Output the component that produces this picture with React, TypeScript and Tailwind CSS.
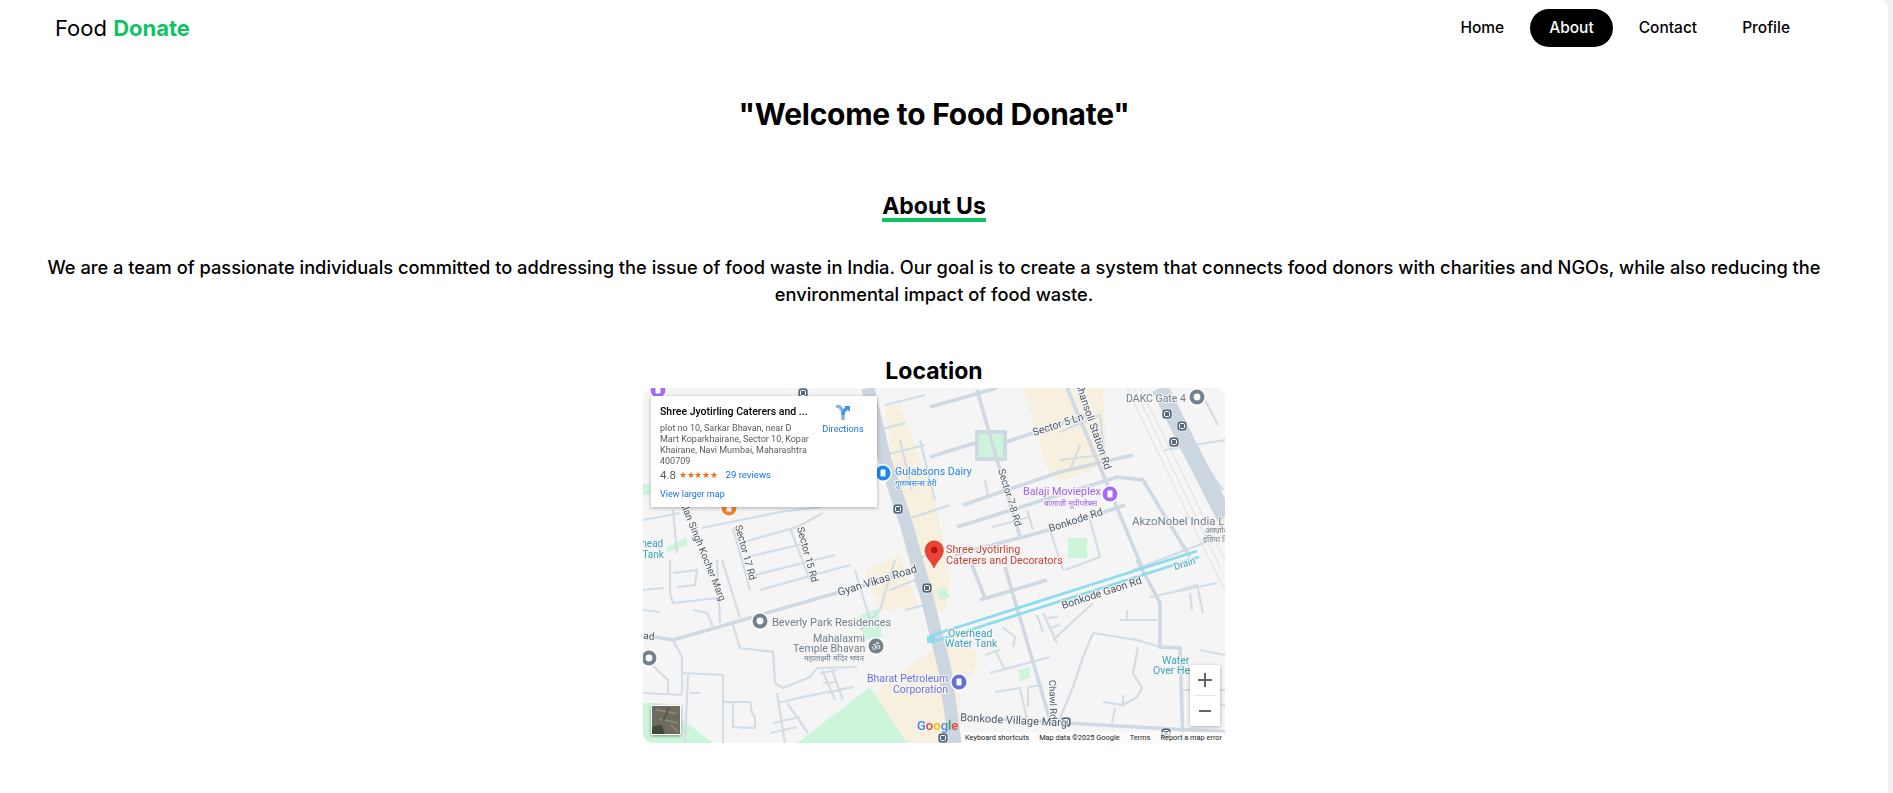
import React from "react";

const poppins = "font-['Inter','Noto_Sans',sans-serif]";

const navLinks = ["Home", "About", "Contact", "Profile"];

// road centre lines, in page coordinates (viewBox of the map starts at 643,388)
const mediumRoads = [
  "M643 635 L673 640 L840 592 L900 575",
  "M955 555 L1060 527 L1125 505",
  "M930 457 L975 443 M1003 443 L1087 415",
  "M930 407 L997 388",
  "M977 390 L1000 470 L1020 537",
  "M1005 567 L1050 720",
  "M1067 388 L1143 570",
  "M1137 560 L1160 603 L1160 647 L1180 648 L1183 743",
  "M960 717 L1225 732",
  "M957 527 L1117 477 L1143 480 L1163 513 L1190 557",
  "M963 505 L1060 472 L1133 455",
  "M970 560 L985 598",
  "M980 600 L1047 580",
];
const minorRoads = [
  "M670 560 L670 593 L673 603 L717 598 M673 573 L697 570 L695 585 L677 587",
  "M717 560 L720 623 M722 560 L740 618 M693 610 L707 613 L713 627",
  "M733 625 L740 648 L773 652 L775 683 L783 688 L810 677 L817 668 L857 667",
  "M673 640 L682 657 L682 693 M682 673 L723 675 L723 743 M688 675 L685 743",
  "M650 663 L668 680 L668 693 M643 693 L682 695 M690 693 L700 693",
  "M723 702 L750 702 L752 713 L755 717 L755 728 L733 727 L733 702",
  "M777 693 L785 743 M777 703 L803 697 L853 687 M787 703 L808 733 M770 733 L797 727 M773 723 L800 717",
  "M822 670 L835 700 M832 670 L843 700 M820 673 L837 670 M823 683 L837 682 M827 693 L853 687",
  "M673 510 L677 553 M702 528 L780 512 L820 507 M740 543 L797 527 L823 513 M747 557 L807 543",
  "M733 528 L750 590 M790 528 L810 580 M755 575 L835 555 M760 590 L850 565",
  "M643 520 L680 513 M643 590 L664 588 M643 610 L660 612",
  "M885 405 L925 395 M878 430 L905 423 M885 455 L925 445 M900 440 L912 490 M920 440 L935 500",
  "M905 520 L950 505 M915 560 L945 548 M890 590 L915 580 L925 605 L905 610",
  "M855 570 L870 620 M895 560 L880 610 L860 630",
  "M1093 633 L1137 640 L1160 647 M1093 633 L1083 657 L1073 687 L1058 723",
  "M1138 647 L1133 673 L1142 688 L1137 697 L1123 705 L1103 702 M1123 695 L1123 705 M1115 708 L1112 723",
  "M1170 593 L1197 585 L1203 613 M1190 593 L1192 610 M1150 597 L1217 583 M1120 620 L1157 620 M1127 610 L1127 620",
  "M990 673 L1050 657 M1002 627 L1015 637 L1013 647 M995 650 L1005 670 M985 655 L1000 650",
  "M995 692 L1020 688 L1027 720 M1028 687 L1043 685 M1028 687 L1028 707",
  "M1037 615 L1043 632 M1043 613 L1057 643 M1047 618 L1058 617 M1050 628 L1060 625 M1053 640 L1093 603",
  "M985 480 L988 497 M992 527 L1030 517 M1027 510 L1033 530",
  "M1050 530 L1063 570 M1090 520 L1100 557 M1065 570 L1100 557 M1133 570 L1225 535",
  "M1197 453 L1223 490 M1205 400 L1218 425 M1165 450 L1225 440",
  "M1060 432 L1100 415 L1105 460 M1080 445 L1070 470 M1060 460 L1100 455",
  "M1183 690 L1225 690 M1200 650 L1225 655 M1190 700 L1225 705",
];

const pois = [
  { x: 1197, y: 397, color: "#72838f", glyph: "ring" },
  { x: 760, y: 621, color: "#72838f", glyph: "ring" },
  { x: 649, y: 658, color: "#72838f", glyph: "ring" },
  { x: 876, y: 646, color: "#72838f", glyph: "om" },
  { x: 959, y: 682, color: "#6670d4", glyph: "P" },
  { x: 883, y: 473, color: "#1a88f0", glyph: "B" },
  { x: 1110, y: 494, color: "#a56bf5", glyph: "T" },
  { x: 729, y: 508, color: "#f2842c", glyph: "F" },
  { x: 658, y: 390, color: "#a56bf5", glyph: "T" },
];

const transit = [
  [803, 393],
  [898, 509],
  [1167, 414],
  [1182, 426],
  [1174, 442],
  [927, 588],
  [1066, 722],
  [943, 738],
  [1166, 733],
];

type Label = {
  x: number;
  y: number;
  t: string;
  c: string;
  s?: number;
  r?: number;
  a?: "start" | "middle" | "end";
};

const dark = "#4d5a68";
const gray = "#74808c";
const teal = "#3ea3b8";
const hindi = "'Noto Sans','Noto Sans CJK SC',sans-serif";

const labels: Label[] = [
  { x: 1105, y: 470, t: "Ghansoli Station Rd", c: dark, r: 71, a: "end" },
  { x: 1034, y: 436, t: "Sector 5 Ln", c: dark, r: -18 },
  { x: 1126, y: 402, t: "DAKC Gate 4", c: gray },
  { x: 1023, y: 495, t: "Balaji Movieplex", c: "#a262ea", s: 10.8 },
  { x: 895, y: 475, t: "Gulabsons Dairy", c: "#2b86e0", s: 10.6 },
  { x: 1132, y: 525, t: "AkzoNobel India Limited", c: gray, s: 11.5 },
  { x: 1175, y: 570, t: "Drain", c: teal, r: -17, s: 9.5 },
  { x: 946, y: 553, t: "Shree Jyotirling", c: "#d23f31", s: 10.8 },
  { x: 946, y: 564, t: "Caterers and Decorators", c: "#d23f31", s: 10.8 },
  { x: 1063, y: 609, t: "Bonkode Gaon Rd", c: dark, r: -18 },
  { x: 1050, y: 532, t: "Bonkode Rd", c: dark, r: -18 },
  { x: 948, y: 637, t: "Overhead", c: teal, s: 10.5 },
  { x: 945, y: 647, t: "Water Tank", c: teal, s: 10.5 },
  { x: 1162, y: 664, t: "Water", c: teal, s: 10.5 },
  { x: 1153, y: 674, t: "Over Head", c: teal, s: 10.5 },
  { x: 1049, y: 680, t: "Chawl Rd", c: dark, r: 88, s: 9.5 },
  { x: 960, y: 721, t: "Bonkode Village Marg", c: dark, r: 3, s: 11 },
  { x: 839, y: 596, t: "Gyan Vikas Road", c: dark, r: -17, s: 11 },
  { x: 772, y: 626, t: "Beverly Park Residences", c: gray, s: 11 },
  { x: 813, y: 642, t: "Mahalaxmi", c: gray, s: 10.6 },
  { x: 793, y: 652, t: "Temple Bhavan", c: gray, s: 10.6 },
  { x: 867, y: 682, t: "Bharat Petroleum", c: "#6b74d6", s: 10.5 },
  { x: 893, y: 693, t: "Corporation", c: "#6b74d6", s: 10.5 },
  { x: 735, y: 526, t: "Sector 17 Rd", c: dark, r: 75, s: 10 },
  { x: 797, y: 528, t: "Sector 15 Rd", c: dark, r: 75, s: 10 },
  { x: 678, y: 498, t: "Balan Singh Kocher Marg", c: dark, r: 68, s: 10 },
  { x: 998, y: 470, t: "Sector 7-8 Rd", c: dark, r: 73, s: 10 },
  { x: 621, y: 547, t: "Overhead", c: teal, s: 10 },
  { x: 614, y: 558, t: "Water Tank", c: teal, s: 10 },
  { x: 654, y: 640, t: "Sector Road", c: dark, r: 6, s: 10, a: "end" },
];

const hindiLabels: Label[] = [
  { x: 1044, y: 506, t: "बालाजी मूवीप्लेक्स", c: "#a262ea", s: 8 },
  { x: 895, y: 486, t: "गुलाबसन्स डेरी", c: "#2b86e0", s: 8 },
  { x: 804, y: 661, t: "महालक्ष्मी मंदिर भवन", c: gray, s: 8 },
  { x: 1205, y: 533, t: "अक्ज़ोनोबेल", c: gray, s: 8 },
  { x: 1203, y: 542, t: "इंडिया लिमिटेड", c: gray, s: 8 },
];

const MapDrawing = () => (
  <svg
    viewBox="643 388 582 355"
    className="block w-full h-full blur-[0.35px] font-['Roboto',sans-serif]"
  >
    <rect x="643" y="388" width="582" height="355" fill="#f5f5f5" />

    {/* beige built-up blocks */}
    <g fill="#f7f0de">
      <path d="M1023 388 L1103 388 L1107 463 L1067 480 L1050 478 Z" />
      <path d="M885 405 L900 405 L935 500 L950 580 L945 612 L925 610 L905 550 Z" />
      <path d="M873 693 L940 643 L975 650 L978 665 L960 690 L960 743 L907 743 Z" />
      <path d="M865 570 L900 555 L918 605 L880 612 Z" />
    </g>

    {/* parks */}
    <g fill="#cdf5dc">
      <rect x="978" y="433" width="26" height="25" />
      <rect x="1068" y="538" width="19" height="20" />
      <path d="M857 617 L878 608 L882 637 L866 640 Z" />
      <path d="M797 743 L870 687 L907 743 Z" />
      <path d="M643 703 L660 703 L713 743 L643 743 Z" />
      <path d="M667 547 L687 537 L687 545 L667 553 Z" />
      <path d="M643 484 L650 484 L650 495 L643 495 Z" />
      <path d="M1018 670 L1030 667 L1030 678 L1020 681 Z" />
      <path d="M936 590 L945 587 L950 597 L940 600 Z" />
      <path d="M1220 514 L1225 514 L1225 522 L1220 522 Z" />
    </g>

    {/* railway */}
    <g stroke="#dedede" strokeWidth="1" fill="none">
      <path d="M1127 388 L1213 567 L1225 590" />
      <path d="M1134 388 L1220 567" />
      <path d="M1140 388 L1225 560" />
    </g>

    {/* roads */}
    <g fill="none" stroke="#d3dde6" strokeWidth="2.2">
      {minorRoads.map((d) => (
        <path key={d} d={d} />
      ))}
    </g>
    <g fill="none" stroke="#ced9e3" strokeWidth="3.6">
      {mediumRoads.map((d) => (
        <path key={d} d={d} />
      ))}
      <rect x="977" y="432" width="28" height="27" strokeWidth="4" />
    </g>
    <g fill="none" stroke="#cbd6e0">
      <path d="M868 388 L885 460 L905 520 L925 590 L945 670 L955 743" strokeWidth="13" />
      <path d="M1160 388 L1187 443 L1225 517" strokeWidth="17" />
    </g>

    {/* canal */}
    <g fill="none" stroke="#8cdcef" strokeWidth="2.8">
      <path d="M930 636 L1197 551" />
      <path d="M932 642 L1199 557" />
    </g>
    <rect x="927" y="636" width="8" height="7" fill="#8cdcef" />

    {/* pois */}
    {pois.map((p) => (
      <g key={`${p.x}-${p.y}`}>
        <path
          d={`M${p.x - 7} ${p.y + 5} L${p.x} ${p.y + 12} L${p.x + 7} ${p.y + 5} Z`}
          fill="#ffffff"
        />
        <circle cx={p.x} cy={p.y} r="9" fill="#ffffff" />
        <circle cx={p.x} cy={p.y} r="7.5" fill={p.color} />
        {p.glyph === "ring" && <circle cx={p.x} cy={p.y} r="3.4" fill="#ffffff" />}
        {p.glyph === "om" && (
          <text x={p.x} y={p.y + 3.5} fontSize="10" fill="#ffffff" textAnchor="middle" fontFamily={hindi}>
            ॐ
          </text>
        )}
        {p.glyph !== "ring" && p.glyph !== "om" && (
          <rect x={p.x - 2.5} y={p.y - 3.5} width="5" height="7" rx="1" fill="#ffffff" />
        )}
      </g>
    ))}

    {/* transit stops */}
    {transit.map(([x, y]) => (
      <g key={`${x}-${y}`}>
        <rect x={x - 5} y={y - 5} width="10" height="10" rx="3" fill="#55677a" stroke="#ffffff" strokeOpacity="0.6" />
        <rect x={x - 2.5} y={y - 2.5} width="5" height="5" rx="1" fill="none" stroke="#ffffff" strokeWidth="1" />
      </g>
    ))}

    {/* labels */}
    <g stroke="#f5f5f5" strokeWidth="2" paintOrder="stroke" fontSize="10.5">
      {labels.map((l) => (
        <text
          key={l.t + l.x}
          x={l.x}
          y={l.y}
          fill={l.c}
          fontSize={l.s}
          textAnchor={l.a}
          transform={l.r ? `rotate(${l.r} ${l.x} ${l.y})` : undefined}
        >
          {l.t}
        </text>
      ))}
      {hindiLabels.map((l) => (
        <text key={l.t} x={l.x} y={l.y} fill={l.c} fontSize={l.s} fontFamily={hindi}>
          {l.t}
        </text>
      ))}
    </g>

    {/* red pin */}
    <path
      d="M934 568 C931 561 925 557 925 550 A9.2 9.2 0 0 1 943.4 550 C943.4 557 937 561 934 568 Z"
      fill="#ea4335"
      stroke="#c5221f"
      strokeWidth="0.5"
    />
    <circle cx="934.2" cy="550" r="3.2" fill="#b31412" />

    {/* google mark */}
    <text x="917" y="730" fontSize="13" fontWeight="500" fontFamily="Roboto, sans-serif">
      <tspan fill="#4285f4">G</tspan>
      <tspan fill="#ea4335">o</tspan>
      <tspan fill="#fbbc05">o</tspan>
      <tspan fill="#4285f4">g</tspan>
      <tspan fill="#34a853">l</tspan>
      <tspan fill="#ea4335">e</tspan>
    </text>
  </svg>
);

const GoogleMapEmbed = () => (
  <div className="relative mx-auto w-[582px] h-[355px] rounded-[10px] overflow-hidden font-['Roboto',sans-serif]">
    <MapDrawing />

    {/* place card */}
    <div className="absolute left-[8px] top-[8px] w-[226px] h-[111px] bg-white shadow-[0_1px_4px_rgba(0,0,0,0.3)] pl-[9px] pt-[9px] flex blur-[0.25px]">
      <div className="w-[163px] shrink-0">
        <div className="text-[10.5px] leading-[14px] font-medium text-black whitespace-nowrap">
          Shree Jyotirling Caterers and ...
        </div>
        <div className="mt-[4px] text-[9px] leading-[11px] text-[#5b5b5b] whitespace-nowrap">
          plot no 10, Sarkar Bhavan, near D
          <br />
          Mart Koparkhairane, Sector 10, Kopar
          <br />
          Khairane, Navi Mumbai, Maharashtra
          <br />
          400709
        </div>
        <div className="mt-[1px] flex items-center h-[15px] text-[#5b5b5b]">
          <span className="text-[11.5px]">4.8</span>
          <span className="ml-[3px] text-[9px] text-[#e7711b] tracking-[-0.3px]">★★★★★</span>
          <span className="ml-[8px] text-[9.6px] text-[#1a73e8]">29 reviews</span>
        </div>
        <div className="mt-[6px] text-[9px] leading-[11px] text-[#1a73e8]">View larger map</div>
      </div>
      <div className="flex flex-col items-center w-[42px] -ml-[1px]">
        <svg viewBox="0 0 16 16" className="w-[16px] h-[16px]">
          <path d="M1 1 L4 1 L8 6 L8 15" fill="none" stroke="#7fb4f2" strokeWidth="3.4" />
          <path d="M8 10 L8 7 L12 3" fill="none" stroke="#4a8fe8" strokeWidth="3.4" />
          <path d="M9 1 L15 1 L15 7 Z" fill="#4a8fe8" />
        </svg>
        <span className="mt-[2px] text-[9.2px] leading-[11px] text-[#1a73e8]">Directions</span>
      </div>
    </div>

    {/* satellite thumbnail */}
    <div className="absolute left-[8px] top-[317px] w-[30px] h-[30px] border border-white shadow-[0_1px_3px_rgba(0,0,0,0.4)] bg-[#6f6a5c] overflow-hidden">
      <svg viewBox="0 0 30 30" className="block w-full h-full blur-[0.5px]">
        <rect width="30" height="30" fill="#6e6b5e" />
        <path d="M0 22 L10 20 L14 30 L0 30 Z" fill="#3c4a40" />
        <path d="M4 4 L26 8 M8 14 L28 18 M20 20 L28 28" stroke="#8a8676" strokeWidth="2" />
        <path d="M18 2 L12 16" stroke="#59564a" strokeWidth="2" />
      </svg>
    </div>

    {/* zoom control */}
    <div className="absolute left-[547px] top-[277px] w-[30px] h-[61px] bg-white shadow-[0_1px_4px_rgba(0,0,0,0.3)] flex flex-col items-center">
      <svg viewBox="0 0 14 14" className="mt-[8px] w-[14px] h-[14px]">
        <path d="M7 0 V14 M0 7 H14" stroke="#666666" strokeWidth="2" />
      </svg>
      <div className="mt-[8px] w-[22px] h-px bg-[#e6e6e6]" />
      <svg viewBox="0 0 14 14" className="mt-[8px] w-[14px] h-[14px]">
        <path d="M1 7 H13" stroke="#666666" strokeWidth="2" />
      </svg>
    </div>

    {/* attribution strip */}
    <div className="absolute right-0 bottom-0 w-[263px] h-[11px] bg-white/70 flex items-center text-[7.4px] text-[#222222] whitespace-nowrap">
      <span className="ml-[3px]">Keyboard shortcuts</span>
      <span className="ml-[10px]">Map data ©2025 Google</span>
      <span className="ml-[10px]">Terms</span>
      <span className="ml-[10px]">Report a map error</span>
    </div>
  </div>
);

const App = () => {
  return (
    <div className="flex h-screen overflow-hidden bg-[#f1f1f1]">
      <div className={`w-[1888px] h-full bg-white rounded-tr-lg text-black ${poppins}`}>
        <div className="w-[1868px]">
          {/* Nav */}
          <nav className="flex items-center justify-between h-[56px] pl-[55px] pr-[59px]">
            <div className="text-[22px]">
              Food <span className="font-bold text-[#0fc365]">Donate</span>
            </div>
            <ul className="flex items-center gap-[7px] text-[15.5px] font-medium">
              {navLinks.map((link) => (
                <li
                  key={link}
                  className={`h-[38px] px-[19px] flex items-center rounded-[19px] ${
                    link === "About" ? "bg-black text-white" : ""
                  }`}
                >
                  {link}
                </li>
              ))}
            </ul>
          </nav>

          {/* Heading */}
          <h1 className="mt-[35px] text-center text-[30px] leading-[46px] font-bold tracking-[-0.25px]">
            "Welcome to Food Donate"
          </h1>

          {/* About */}
          <div className="mt-[57px] flex justify-center">
            <h2 className="text-[23px] leading-[24px] font-bold border-b-[4px] border-[#0fc365]">
              About Us
            </h2>
          </div>
          <p className="mt-[32px] text-center text-[18.25px] leading-[27px] font-[450]">
            We are a team of passionate individuals committed to addressing the issue of food waste
            in India. Our goal is to create a system that connects food donors with charities and
            NGOs, while also reducing the
            <br />
            environmental impact of food waste.
          </p>

          {/* Location */}
          <h2 className="mt-[46px] text-center text-[23px] leading-[34px] font-bold">Location</h2>
          <GoogleMapEmbed />
        </div>
      </div>
    </div>
  );
};

export default App;
